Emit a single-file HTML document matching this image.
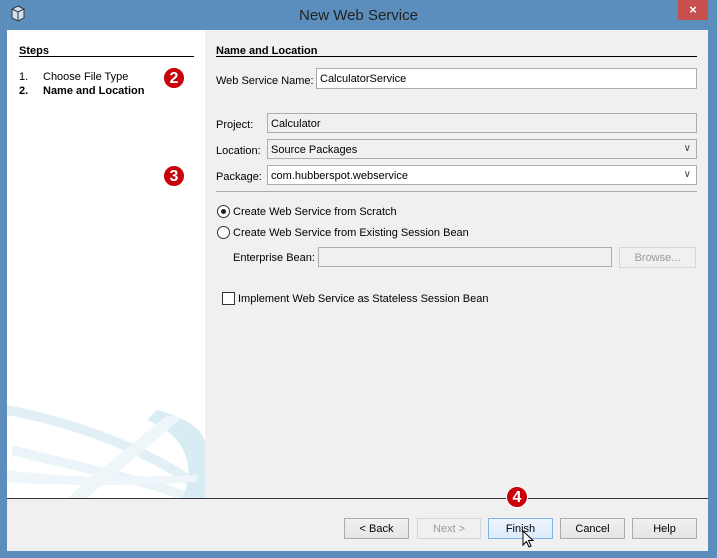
<!DOCTYPE html>
<html><head><style>
*{margin:0;padding:0;box-sizing:border-box}
body{width:717px;height:558px;background:#5b8ebd;font-family:"Liberation Sans",Tahoma,sans-serif;font-size:11px;color:#000;position:relative;overflow:hidden}
.a{position:absolute}
.t{position:absolute;margin-top:2px}
.field{position:absolute;border:1px solid #abadb3;background:#fff;padding:4px 0 0 3px;height:20px}
.ro{background:#f0f0f0}
.btn{position:absolute;top:518px;height:21px;border:1px solid #acacac;background:linear-gradient(#f0f0f0,#e5e5e5);text-align:center;line-height:20px}
.badge{position:absolute;width:22px;height:22px;border-radius:50%;background:#c8000a;color:#fff;font-weight:bold;font-size:16px;text-align:center;line-height:22px;border:1px solid #fff}
.chev{position:absolute;right:5px;top:3px;color:#444;font-size:10px}
.radio{position:absolute;width:13px;height:13px;border-radius:50%;border:1px solid #333;background:#fff}
</style></head><body>
<svg class="a" style="left:10px;top:5px" width="16" height="18" viewBox="0 0 16 18"><path d="M8 1L14 4V13L8 16L2 13V4Z" fill="#cfe0ef" stroke="#333"/><path d="M2 4L8 7L14 4M8 7V16" fill="none" stroke="#333"/></svg>
<div class="a" style="left:0;width:717px;top:7px;text-align:center;font-size:15px;color:#222">New Web Service</div>
<div class="a" style="left:678px;top:0;width:30px;height:20px;background:#c7504f;color:#fff;text-align:center;font-size:13px;line-height:20px;font-weight:bold">×</div>
<div class="a" style="left:7px;top:30px;width:701px;height:521px;background:#f0f0f0"></div>
<div class="a" style="left:7px;top:30px;width:198px;height:468px;background:#fff;overflow:hidden">
<svg width="198" height="468"><g opacity="0.4">
<path d="M0 385 C80 400 150 430 198 468 L198 455 C150 420 80 390 0 375Z" fill="#b9dcea"/>
<path d="M5 425 C60 440 120 450 170 468 L198 468 C140 445 70 432 5 415Z" fill="#cde6f1"/>
<path d="M150 380 C180 388 198 400 198 415 L198 468 L175 468 C190 440 180 405 140 390Z" fill="#9fd0e3"/>
<path d="M160 385 L60 468 L80 468 L175 388Z" fill="#d6ebf4"/>
<path d="M0 440 C60 448 120 448 190 445 L190 452 C120 456 60 456 0 452Z" fill="#d6ebf4"/>
</g></svg></div>
<div class="a" style="left:7px;top:498px;width:701px;height:1px;background:#333"></div>
<div class="t" style="left:19px;top:43px;font-weight:bold">Steps</div>
<div class="a" style="left:19px;top:56px;width:175px;height:1px;background:#000"></div>
<div class="t" style="left:19px;top:69px">1.</div><div class="t" style="left:43px;top:69px">Choose File Type</div>
<div class="t" style="left:19px;top:83px;font-weight:bold">2.</div><div class="t" style="left:43px;top:83px;font-weight:bold">Name and Location</div>
<div class="badge" style="left:163px;top:67px">2</div>
<div class="t" style="left:216px;top:43px;font-weight:bold">Name and Location</div>
<div class="a" style="left:216px;top:56px;width:481px;height:1px;background:#000"></div>
<div class="t" style="left:216px;top:73px">Web Service Name:</div>
<div class="field" style="left:316px;top:68px;width:381px;height:21px">CalculatorService</div>
<div class="t" style="left:216px;top:117px">Project:</div>
<div class="field ro" style="left:267px;top:113px;width:430px">Calculator</div>
<div class="t" style="left:216px;top:143px">Location:</div>
<div class="field ro" style="left:267px;top:139px;width:430px">Source Packages<span class="chev">&#8744;</span></div>
<div class="t" style="left:216px;top:169px">Package:</div>
<div class="field" style="left:267px;top:165px;width:430px">com.hubberspot.webservice<span class="chev">&#8744;</span></div>
<div class="badge" style="left:163px;top:165px">3</div>
<div class="a" style="left:216px;top:191px;width:481px;height:1px;background:#aaa"></div>
<div class="radio" style="left:217px;top:205px"><div class="a" style="left:3px;top:3px;width:5px;height:5px;border-radius:50%;background:#222"></div></div>
<div class="t" style="left:233px;top:204px">Create Web Service from Scratch</div>
<div class="radio" style="left:217px;top:226px"></div>
<div class="t" style="left:233px;top:225px">Create Web Service from Existing Session Bean</div>
<div class="t" style="left:233px;top:250px">Enterprise Bean:</div>
<div class="field ro" style="left:318px;top:247px;width:294px"></div>
<div class="btn" style="left:619px;top:247px;width:77px;color:#999;background:#f0f0f0;border-color:#d5d5d5">Browse...</div>
<div class="a" style="left:222px;top:292px;width:13px;height:13px;border:1px solid #333;background:#fff"></div>
<div class="t" style="left:238px;top:291px">Implement Web Service as Stateless Session Bean</div>
<div class="btn" style="left:344px;width:65px">&lt; Back</div>
<div class="btn" style="left:417px;width:64px;color:#999;background:#f0f0f0;border-color:#d5d5d5">Next &gt;</div>
<div class="btn" style="left:488px;width:65px;border-color:#7eb4ea;background:linear-gradient(#ecf4fc,#dcecfc)">Finish</div>
<div class="btn" style="left:560px;width:65px">Cancel</div>
<div class="btn" style="left:632px;width:65px">Help</div>
<div class="badge" style="left:506px;top:486px;width:22px;height:22px">4</div>
<svg class="a" style="left:522px;top:530px" width="12" height="20" viewBox="0 0 12 20"><path d="M1 1V15L4.5 11.5L7 17L9 16L6.5 10.5H11Z" fill="#fff" stroke="#000"/></svg>
</body></html>
